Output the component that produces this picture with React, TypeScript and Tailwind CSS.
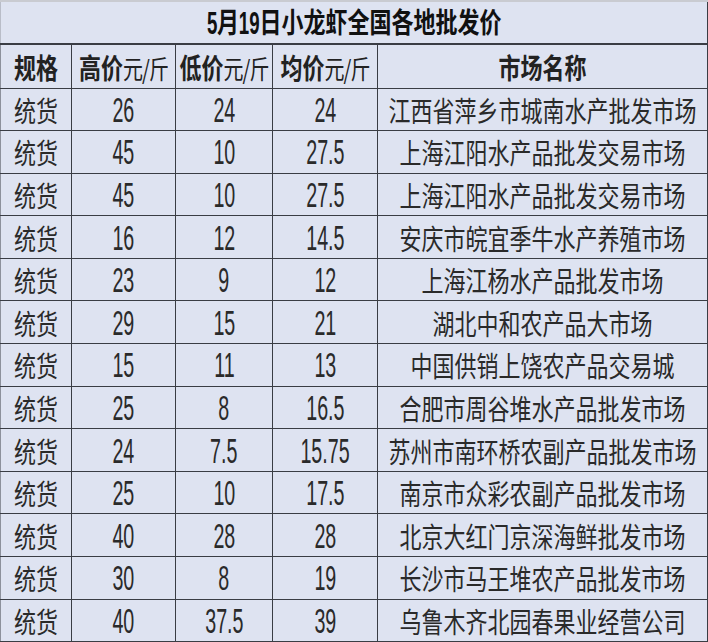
import React from 'react';

const rows = [
  ['26', '24', '24', '江西省萍乡市城南水产批发市场'],
  ['45', '10', '27.5', '上海江阳水产品批发交易市场'],
  ['45', '10', '27.5', '上海江阳水产品批发交易市场'],
  ['16', '12', '14.5', '安庆市皖宜季牛水产养殖市场'],
  ['23', '9', '12', '上海江杨水产品批发市场'],
  ['29', '15', '21', '湖北中和农产品大市场'],
  ['15', '11', '13', '中国供销上饶农产品交易城'],
  ['25', '8', '16.5', '合肥市周谷堆水产品批发市场'],
  ['24', '7.5', '15.75', '苏州市南环桥农副产品批发市场'],
  ['25', '10', '17.5', '南京市众彩农副产品批发市场'],
  ['40', '28', '28', '北京大红门京深海鲜批发市场'],
  ['30', '8', '19', '长沙市马王堆农产品批发市场'],
  ['40', '37.5', '39', '乌鲁木齐北园春果业经营公司'],
];

const cjk = 'font-["Noto_Sans_CJK_SC",sans-serif]';
const num = 'font-["Liberation_Sans",sans-serif]';

function Tall({ children, className = '' }: { children: React.ReactNode; className?: string }) {
  return <span className={`inline-block scale-y-[1.28] ${className}`}>{children}</span>;
}

function Num({ children }: { children: React.ReactNode }) {
  return <span className={`inline-block ${num} scale-x-[0.82] scale-y-[1.45]`}>{children}</span>;
}

export default function App() {
  const cell = 'border-[1.5px] border-[#3a3d44] text-center align-middle p-0';
  return (
    <div className="w-[708px] h-[642px] overflow-hidden bg-white">
      <table className="table-fixed border-collapse w-[707px] bg-[#dee3f1] text-[#222]">
        <colgroup>
          <col className="w-[71px]" />
          <col className="w-[104px]" />
          <col className="w-[97px]" />
          <col className="w-[105px]" />
          <col className="w-[330px]" />
        </colgroup>
        <tbody>
          <tr className="h-[43px]">
            <td
              colSpan={5}
              className={`border-t-2 border-t-[#c9cbd1] border-l border-l-[#b9bdc8] border-r-[1.5px] border-r-[#3a3d44] border-b-2 border-b-[#3a3d44] text-center ${cjk} text-[22px] font-bold text-[#111]`}
            >
              <Tall>
                <span className={`inline-block ${num} text-[22px] scale-x-[0.85] scale-y-[1.1] -mx-[1px]`}>5</span>
                月
                <span className={`inline-block ${num} text-[22px] scale-x-[0.85] scale-y-[1.1] -mx-[2px]`}>19</span>
                日小龙虾全国各地批发价
              </Tall>
            </td>
          </tr>
          <tr className="h-[44px]">
            <td className={`${cell} border-l-[#8d919c] ${cjk} text-[22px] font-bold`}>
              <Tall>规格</Tall>
            </td>
            {['高价', '低价', '均价'].map((h) => (
              <td key={h} className={`${cell} ${cjk}`}>
                <Tall>
                  <span className="text-[22px] font-bold">{h}</span>
                  <span className="text-[20px] tracking-[-1px]">元/斤</span>
                </Tall>
              </td>
            ))}
            <td className={`${cell} ${cjk} text-[22px] font-bold`}>
              <Tall>市场名称</Tall>
            </td>
          </tr>
          {rows.map((r, i) => (
            <tr key={i} className="h-[42.6px]">
              <td className={`${cell} border-l-[#8d919c] ${cjk} text-[22px] text-[#2a2a2a]`}>
                <Tall>统货</Tall>
              </td>
              {r.slice(0, 3).map((v, j) => (
                <td key={j} className={`${cell} text-[24px] text-[#2a2a2a]`}>
                  <Num>{v}</Num>
                </td>
              ))}
              <td className={`${cell} ${cjk} text-[22px] text-[#2a2a2a]`}>
                <Tall>{r[3]}</Tall>
              </td>
            </tr>
          ))}
        </tbody>
      </table>
    </div>
  );
}
